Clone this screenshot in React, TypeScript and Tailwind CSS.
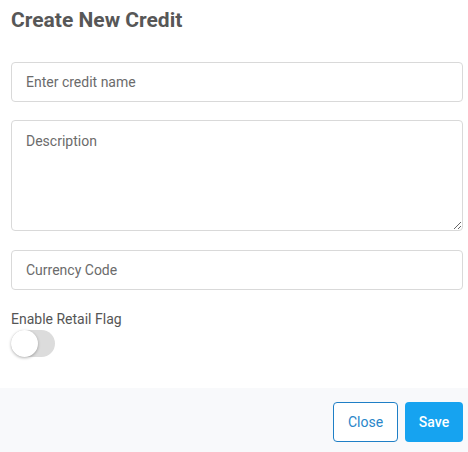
import React, { useState } from 'react';

export default function App() {
  const [retail, setRetail] = useState(false);

  return (
    <div className="w-[468px] h-[452px] bg-white flex flex-col" style={{ fontFamily: 'Roboto, "Liberation Sans", sans-serif' }}>
      <div className="flex-1 pl-[11px] pr-[5px] pt-[8px]">
        <h2 className="text-[21px] leading-[24px] font-bold text-[#575757]">Create New Credit</h2>

        <input
          type="text"
          placeholder="Enter credit name"
          className="mt-[30px] block w-full h-[40px] px-[14px] text-[14px] text-[#333] placeholder:text-[#6b6b6b] border border-[#d9d9d9] rounded-[4px] outline-none"
        />

        <textarea
          placeholder="Description"
          className="mt-[18px] block w-full h-[111px] px-[14px] pt-[10px] text-[14px] text-[#333] placeholder:text-[#6b6b6b] border border-[#d9d9d9] rounded-[4px] outline-none"
        />

        <input
          type="text"
          placeholder="Currency Code"
          className="mt-[19px] block w-full h-[40px] px-[14px] text-[14px] text-[#333] placeholder:text-[#6b6b6b] border border-[#d9d9d9] rounded-[4px] outline-none"
        />

        <div className="mt-[19px] text-[14px] leading-[20px] text-[#555555]">Enable Retail Flag</div>

        <button
          type="button"
          onClick={() => setRetail(!retail)}
          className={`mt-[1px] relative block w-[44px] h-[27px] rounded-full ${retail ? 'bg-[#16a3f0]' : 'bg-[#dcdcdc]'}`}
        >
          <span
            className={`absolute top-0 w-[27px] h-[27px] rounded-full bg-white shadow-[0_1px_3px_rgba(0,0,0,0.3)] ${retail ? 'left-[17px]' : 'left-0'}`}
          />
        </button>
      </div>

      <div className="h-[64px] bg-[#f8f9fb] flex items-center justify-end gap-[7px] pl-[11px] pr-[5px] pt-[4px]">
        <button className="h-[40px] w-[65px] border border-[#1f7fc6] rounded-[4px] text-[14px] text-[#2a86c9] bg-white">
          Close
        </button>
        <button className="h-[40px] w-[58px] rounded-[4px] text-[14px] font-medium text-white bg-[#16a3f0]">
          Save
        </button>
      </div>
    </div>
  );
}
